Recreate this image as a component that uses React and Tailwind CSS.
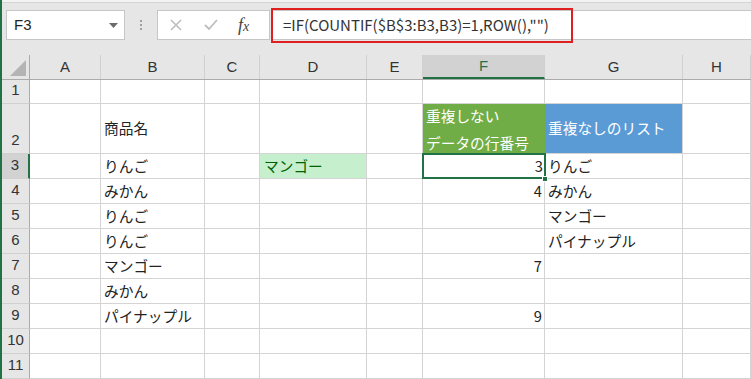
import React from "react";

const cols = [
  { key: "A", w: "w-[71px]" },
  { key: "B", w: "w-[104px]" },
  { key: "C", w: "w-[55px]" },
  { key: "D", w: "w-[107px]" },
  { key: "E", w: "w-[56px]" },
  { key: "F", w: "w-[122px]" },
  { key: "G", w: "w-[138px]" },
  { key: "H", w: "flex-1" },
];

// row data: [rowNo, { col: value }]
const rows = [
  { n: 1, h: "h-[24px]", cells: {} },
  { n: 2, h: "h-[50px]", cells: { B: "商品名" } },
  { n: 3, h: "h-[25px]", cells: { B: "りんご", D: "マンゴー", F: "3", G: "りんご" } },
  { n: 4, h: "h-[25px]", cells: { B: "みかん", F: "4", G: "みかん" } },
  { n: 5, h: "h-[25px]", cells: { B: "りんご", G: "マンゴー" } },
  { n: 6, h: "h-[25px]", cells: { B: "りんご", G: "パイナップル" } },
  { n: 7, h: "h-[25px]", cells: { B: "マンゴー", F: "7" } },
  { n: 8, h: "h-[25px]", cells: { B: "みかん" } },
  { n: 9, h: "h-[25px]", cells: { B: "パイナップル", F: "9" } },
  { n: 10, h: "h-[25px]", cells: {} },
  { n: 11, h: "h-[25px]", cells: {} },
];

const Cell = ({ row, col, value }) => {
  const base = `${col.w} shrink-0 h-full border-r border-b border-[#d4d4d4] flex items-center text-[14.7px] text-[#222]`;

  if (row.n === 2 && col.key === "F") {
    return (
      <div className={`${col.w} shrink-0 h-full border-b border-[#d4d4d4] bg-[#70ad47] text-white text-[14.7px] flex flex-col justify-center pl-[3px] leading-[27px]`}>
        <span>重複しない</span>
        <span>データの行番号</span>
      </div>
    );
  }
  if (row.n === 2 && col.key === "G") {
    return (
      <div className={`${col.w} shrink-0 h-full border-r border-b border-[#d4d4d4] bg-[#5b9bd5] text-white text-[14.7px] flex items-center pl-[3px]`}>
        重複なしのリスト
      </div>
    );
  }
  if (row.n === 3 && col.key === "D") {
    return (
      <div className={`${base} bg-[#c6efce] text-[#006100] pl-[4px]`}>{value}</div>
    );
  }
  if (row.n === 3 && col.key === "F") {
    return (
      <div className={`${col.w} shrink-0 h-full border-b border-[#d4d4d4] relative`}>
        <div className="absolute -left-[1px] -top-[1px] -right-[1px] bottom-[-1px] border-2 border-[#217346] flex items-center justify-end pr-[1px] text-[14.7px] text-[#222]">
          {value}
        </div>
        <div className="absolute -right-[3px] -bottom-[4px] w-[6px] h-[6px] bg-[#217346] border border-white"></div>
      </div>
    );
  }
  if (col.key === "F") {
    return <div className={`${base} justify-end pr-[2px]`}>{value}</div>;
  }
  return <div className={`${base} pl-[3px]`}>{value}</div>;
};

export default function App() {
  return (
    <div
      className="w-[751px] h-[379px] overflow-hidden flex bg-white"
      style={{ fontFamily: '"Noto Sans CJK JP", "Noto Sans", sans-serif' }}
    >
      {/* green edge */}
      <div className="w-[2px] h-full bg-[#217346] shrink-0"></div>

      <div className="flex-1 flex flex-col min-w-0">
        {/* formula bar */}
        <div className="h-[55px] shrink-0 bg-[#e6e6e6] flex flex-col">
          <div className="h-[3px] bg-[#f3f3f3] border-b border-[#d4d4d4]"></div>
          <div className="flex items-center h-[52px] pb-[8px]">
            <div className="ml-[4px] w-[119px] h-[30px] bg-white border border-[#c6c6c6] flex items-center justify-between px-[7px]">
              <span className="text-[15px] text-[#222]" style={{ fontFamily: '"Liberation Sans", sans-serif' }}>F3</span>
              <svg width="9" height="5" viewBox="0 0 9 5" className="mr-[-1px]">
                <path d="M0 0 L9 0 L4.5 5 Z" fill="#6b6b6b" />
              </svg>
            </div>
            <div className="w-[32px] flex flex-col items-center gap-[2px]">
              <span className="w-[2px] h-[2px] bg-[#a0a0a0]"></span>
              <span className="w-[2px] h-[2px] bg-[#a0a0a0]"></span>
              <span className="w-[2px] h-[2px] bg-[#a0a0a0]"></span>
            </div>
            <div className="w-[113px] h-[30px] bg-white border border-[#c6c6c6] flex items-center">
              <svg width="12" height="12" viewBox="0 0 12 12" className="ml-[12px]">
                <path d="M1 1 L11 11 M11 1 L1 11" stroke="#bdbdbd" strokeWidth="1.6" />
              </svg>
              <svg width="14" height="12" viewBox="0 0 14 12" className="ml-[22px]">
                <path d="M1 6 L5 10 L13 1" stroke="#bdbdbd" strokeWidth="1.8" fill="none" />
              </svg>
              <span
                className="ml-[20px] text-[18px] italic text-[#444] leading-none"
                style={{ fontFamily: '"Liberation Serif", serif' }}
              >
                f<span className="text-[14px]">x</span>
              </span>
            </div>
            <div className="ml-[1px] flex-1 h-[30px] bg-white border-y border-[#c6c6c6] flex items-center">
              <div className="h-[35px] w-[302px] border-2 border-[#e02020] flex items-center pl-[10px] text-[15px] text-[#333]">
                =IF(COUNTIF($B$3:B3,B3)=1,ROW(),"")
              </div>
            </div>
          </div>
        </div>

        {/* column header row */}
        <div className="h-[25px] shrink-0 flex bg-[#e6e6e6] border-b border-[#ababab]">
          <div className="w-[28px] shrink-0 h-full border-r border-[#ababab] relative">
            <svg width="16" height="16" viewBox="0 0 16 16" className="absolute right-[3px] bottom-[3px]">
              <path d="M16 0 L16 16 L0 16 Z" fill="#b4b4b4" />
            </svg>
          </div>
          {cols.map((c) => (
            <div
              key={c.key}
              className={`${c.w} shrink-0 h-full border-r border-[#d0d0d0] flex items-center justify-center text-[15px] text-[#333] ${
                c.key === "F" ? "bg-[#d2d2d2] text-[#217346] border-b-2 border-b-[#217346]" : ""
              }`}
              style={{ fontFamily: '"Liberation Sans", sans-serif' }}
            >
              {c.key}
            </div>
          ))}
        </div>

        {/* grid rows */}
        {rows.map((r) => (
          <div key={r.n} className={`${r.h} shrink-0 flex`}>
            <div
              className={`w-[28px] shrink-0 h-full border-b border-[#d0d0d0] flex items-end justify-center pb-[2px] text-[15px] text-[#333] ${
                r.n === 3 ? "bg-[#d2d2d2] border-r-2 border-r-[#217346]" : "bg-[#e6e6e6] border-r border-r-[#ababab]"
              }`}
              style={{ fontFamily: '"Liberation Sans", sans-serif' }}
            >
              {r.n}
            </div>
            {cols.map((c) => (
              <Cell key={c.key} row={r} col={c} value={r.cells[c.key]} />
            ))}
          </div>
        ))}
      </div>
    </div>
  );
}
